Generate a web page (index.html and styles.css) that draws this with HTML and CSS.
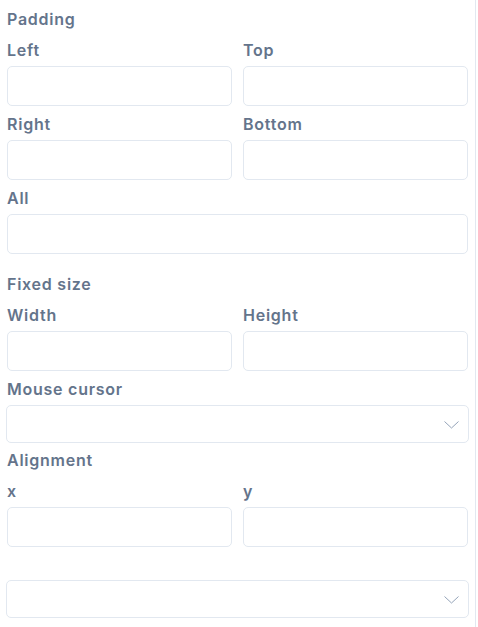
FILE: index.html
```html
<!DOCTYPE html>
<html lang="en">
<head>
<meta charset="utf-8">
<title>Padding</title>
<link rel="stylesheet" href="styles.css">
</head>
<body>
<div class="panel">
  <div class="heading">Padding</div>
  <div class="grid">
    <div class="field"><label class="label">Left</label><input class="input" type="text"></div>
    <div class="field"><label class="label">Top</label><input class="input" type="text"></div>
    <div class="field"><label class="label">Right</label><input class="input" type="text"></div>
    <div class="field"><label class="label">Bottom</label><input class="input" type="text"></div>
  </div>
  <div class="field"><label class="label">All</label><input class="input" type="text"></div>

  <div class="heading section">Fixed size</div>
  <div class="grid">
    <div class="field"><label class="label">Width</label><input class="input" type="text"></div>
    <div class="field"><label class="label">Height</label><input class="input" type="text"></div>
  </div>

  <div class="field">
    <label class="label">Mouse cursor</label>
    <div class="select-wrap">
      <select class="select"><option></option></select>
      <svg class="chevron" width="15" height="8" viewBox="0 0 15 8"><polyline points="0.5,0.5 7.5,7 14.5,0.5" fill="none" stroke="#94a3b8" stroke-width="1"/></svg>
    </div>
  </div>

  <div class="heading">Alignment</div>
  <div class="grid">
    <div class="field"><label class="label">x</label><input class="input" type="text"></div>
    <div class="field"><label class="label">y</label><input class="input" type="text"></div>
  </div>

  <div class="field">
    <label class="label empty"></label>
    <div class="select-wrap">
      <select class="select"><option></option></select>
      <svg class="chevron" width="15" height="8" viewBox="0 0 15 8"><polyline points="0.5,0.5 7.5,7 14.5,0.5" fill="none" stroke="#94a3b8" stroke-width="1"/></svg>
    </div>
  </div>
</div>
</body>
</html>
```

FILE: styles.css
```css
html, body {
  margin: 0;
  padding: 0;
  background: #ffffff;
}

body {
  font-family: Inter, "Noto Sans", "Liberation Sans", sans-serif;
  font-size: 16px;
  color: #64748b;
}

.panel {
  box-sizing: border-box;
  width: 476px;
  min-height: 627px;
  padding: 7px 7px 0 7px;
  border-right: 1px solid #e2e8f0;
  display: flex;
  flex-direction: column;
  gap: 5px;
}

.heading {
  font-weight: 600;
  letter-spacing: 0.75px;
  line-height: 24px;
  height: 24px;
  margin-bottom: 1px;
}

.heading.section {
  margin-top: 13px;
}

.grid {
  display: grid;
  grid-template-columns: 1fr 1fr;
  column-gap: 11px;
  row-gap: 5px;
}

.field {
  display: flex;
  flex-direction: column;
  gap: 5px;
}

.label {
  font-weight: 600;
  letter-spacing: 0.75px;
  line-height: 24px;
  height: 24px;
  padding-top: 1px;
  box-sizing: border-box;
}

.label.empty {
  height: 23px;
}

.input {
  box-sizing: border-box;
  height: 40px;
  width: 100%;
  margin: 0;
  border: 1px solid #e2e8f0;
  border-radius: 5px;
  background: #ffffff;
  font: inherit;
  padding: 0 10px;
}

.select-wrap {
  position: relative;
  margin: 0 -1px;
}

.select {
  box-sizing: border-box;
  display: block;
  width: 100%;
  height: 38px;
  margin: 0;
  border: 1px solid #e2e8f0;
  border-radius: 5px;
  background: #ffffff;
  appearance: none;
  -webkit-appearance: none;
  font: inherit;
  padding: 0 10px;
}

.chevron {
  position: absolute;
  right: 10px;
  top: 16px;
}
```
